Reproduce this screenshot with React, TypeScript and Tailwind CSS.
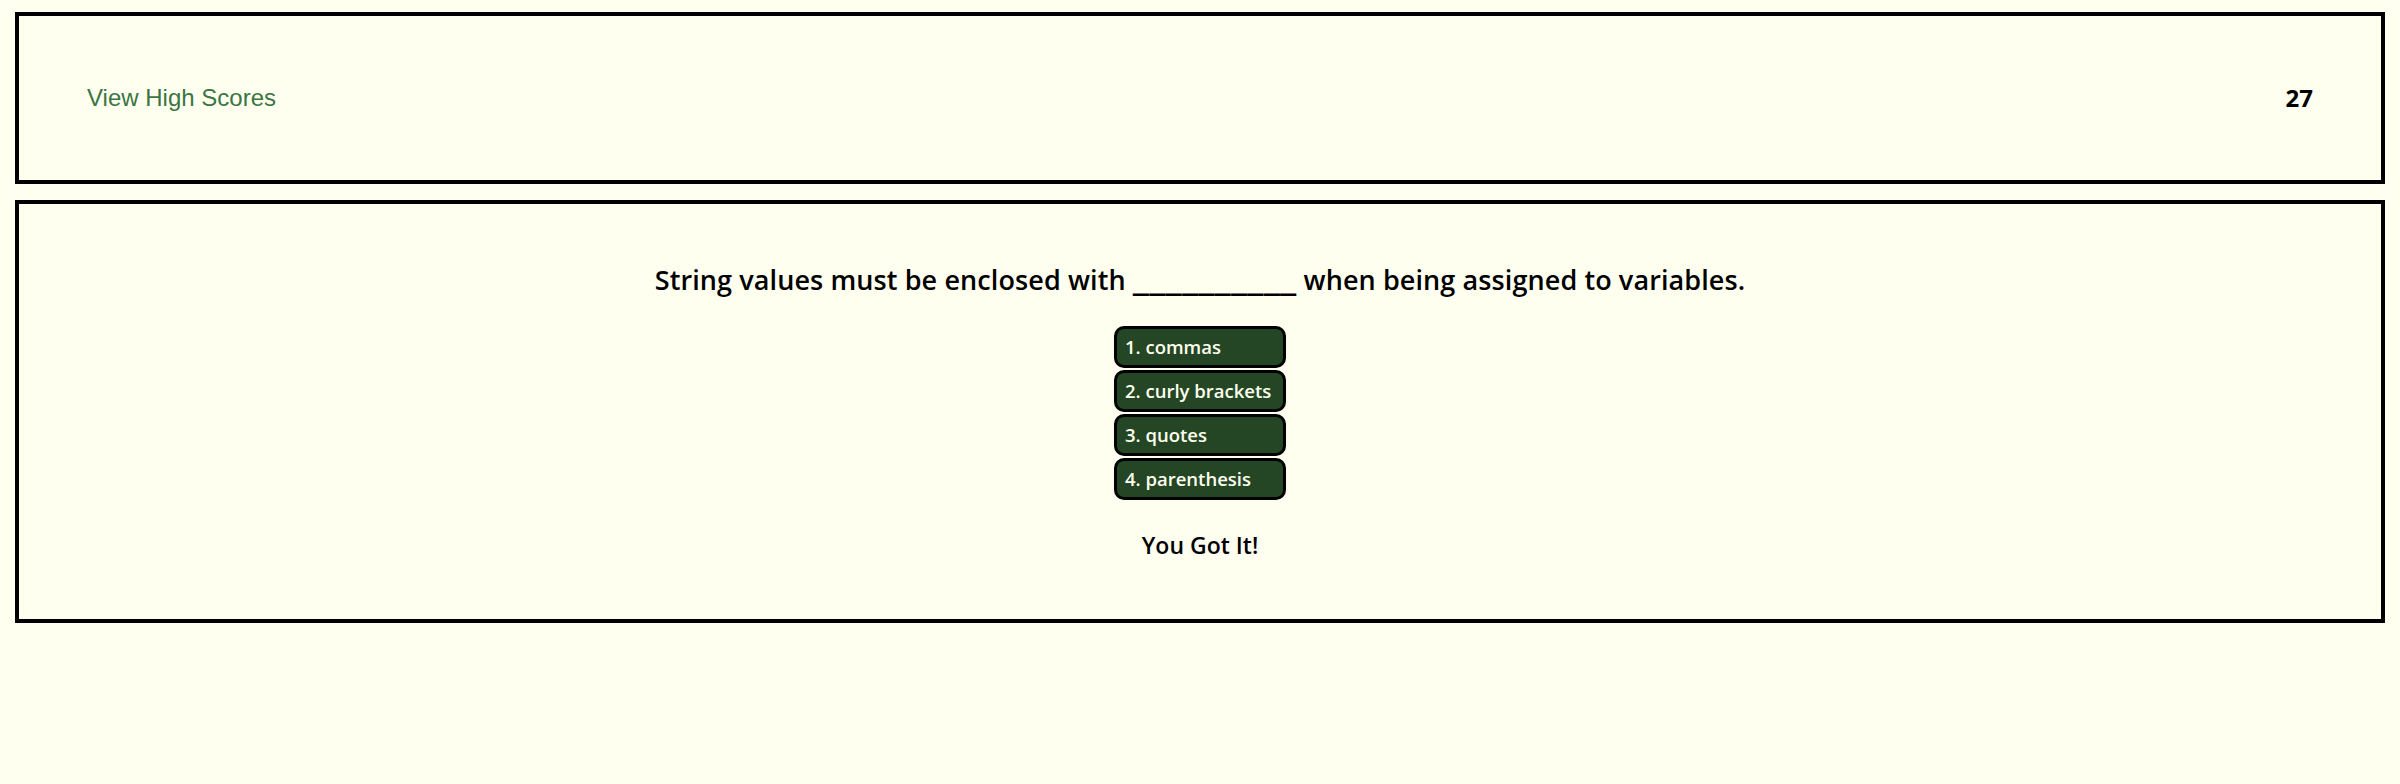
const choices = ['1. commas', '2. curly brackets', '3. quotes', '4. parenthesis'];

export default function App() {
  return (
    <div className="min-h-[784px] bg-[#fffff0] px-[15px] pt-[12px]">
      {/* header */}
      <header className="flex h-[172px] items-center justify-between border-4 border-black px-[68px]">
        <a
          href="#"
          className="text-[24px] text-[#3a7542]"
          style={{ fontFamily: '"Liberation Sans", Arial, sans-serif' }}
        >
          View High Scores
        </a>
        <span className="text-[24px] font-bold text-black" style={{ fontFamily: '"Open Sans", sans-serif' }}>
          27
        </span>
      </header>

      {/* quiz card */}
      <main
        className="mt-[16px] flex flex-col items-center border-4 border-black pb-[61px] pt-[60px] text-black"
        style={{ fontFamily: '"Open Sans", sans-serif' }}
      >
        <h2 className="text-[27px] font-semibold leading-[32px] tracking-[0.1px]">
          String values must be enclosed with{' '}
          <span className="leading-none" style={{ fontFamily: '"DejaVu Sans Mono", monospace' }}>
            __________
          </span>{' '}
          when being assigned to variables.
        </h2>

        <div className="mt-[30px] flex flex-col gap-[2px]">
          {choices.map((c) => (
            <button
              key={c}
              className="flex h-[42px] w-[172px] items-center rounded-[10px] border-[3px] border-black bg-[#244624] pl-[8px] text-left text-[18.5px] font-semibold text-[#fffff0]"
            >
              {c}
            </button>
          ))}
        </div>

        <p className="mt-[32px] text-[23px] font-semibold leading-[26px]">You Got It!</p>
      </main>
    </div>
  );
}
